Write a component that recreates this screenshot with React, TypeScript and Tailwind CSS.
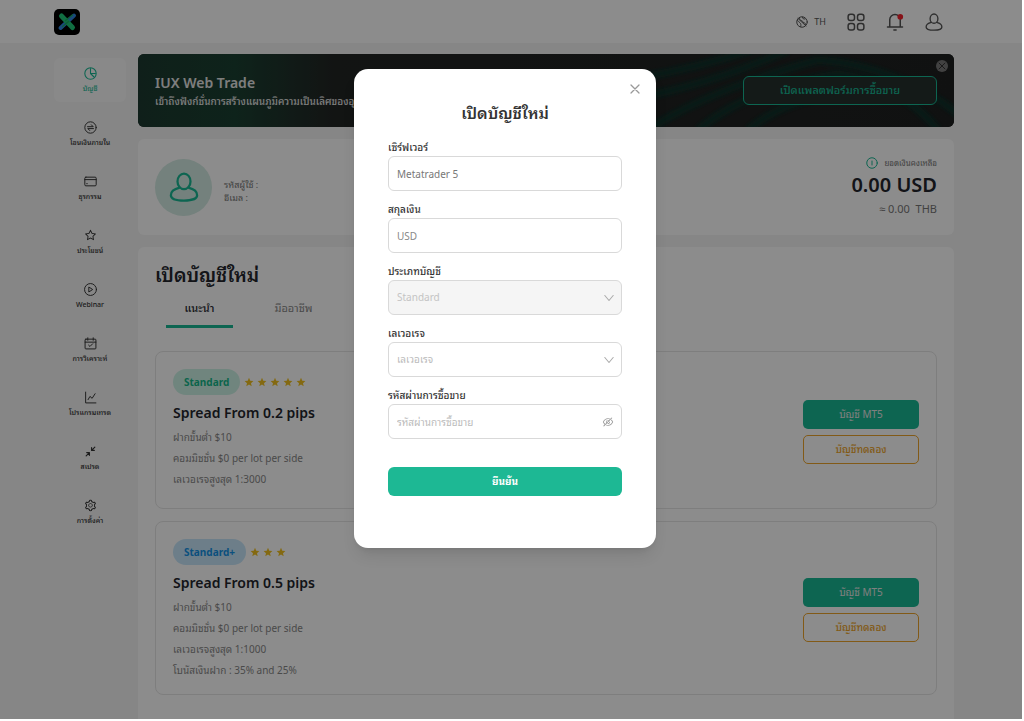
import { useState } from "react";
import type { ReactNode } from "react";
import { AiOutlineEyeInvisible, AiOutlineEye, AiOutlineStar, AiOutlineSetting } from "react-icons/ai";

type IconProps = { className?: string };

function Svg({ className, children, width = 1.5 }: IconProps & { children: ReactNode; width?: number }) {
  return (
    <svg
      viewBox="0 0 24 24"
      fill="none"
      stroke="currentColor"
      strokeWidth={width}
      strokeLinecap="round"
      strokeLinejoin="round"
      className={className}
      aria-hidden="true"
    >
      {children}
    </svg>
  );
}

function UserIcon({ className }: IconProps) {
  return (
    <Svg className={className} width={1.8}>
      <ellipse cx="12" cy="7.500" rx="5.200" ry="6.200" />
      <path d="M8.500 12.500C4.500 13.500 1.500 15.800 1.500 18.500c0 2.900 4.200 4.300 10.500 4.300s10.500-1.400 10.500-4.300c0-2.700-3-5-7-6" />
    </Svg>
  );
}

function PieIcon({ className }: IconProps) {
  return (
    <Svg className={className} width={2}>
      <circle cx="12" cy="12" r="10.500" />
      <path d="M12 3v9h9M12 12l6 6" />
    </Svg>
  );
}

function TransferIcon({ className }: IconProps) {
  return (
    <Svg className={className} width={1.8}>
      <circle cx="12" cy="12" r="10.500" />
      <path d="M6.500 10.500h10.500l-3.500-3.500M17.500 14H7l3.500 3.500" />
    </Svg>
  );
}

function CardIcon({ className }: IconProps) {
  return (
    <Svg className={className} width={1.8}>
      <rect x="1.500" y="4" width="21" height="16" rx="2" />
      <path d="M1.500 8.500h21M5 16h1" />
    </Svg>
  );
}

function PlayIcon({ className }: IconProps) {
  return (
    <Svg className={className} width={1.8}>
      <circle cx="12" cy="12" r="11" />
      <path d="M9.500 7.800l6.500 4.200-6.500 4.200z" />
    </Svg>
  );
}

function CalendarIcon({ className }: IconProps) {
  return (
    <Svg className={className} width={1.8}>
      <rect x="2" y="4" width="20" height="18" rx="1.500" />
      <path d="M2 9.500h20M7 1.500v4.500M17 1.500v4.500M8.500 15l2.500 2.500 5-5" />
    </Svg>
  );
}

function ChartIcon({ className }: IconProps) {
  return (
    <Svg className={className} width={1.8}>
      <path d="M3 2v20h19" />
      <path d="M7.500 16l3.500-6 4 3.500 5.500-8.500" />
    </Svg>
  );
}

function SpreadIcon({ className }: IconProps) {
  return (
    <Svg className={className} width={2.2}>
      <path d="M20 4l-6 6M14 5v5h5M4 20l6-6M10 19v-5H5" />
    </Svg>
  );
}

function GlobeIcon({ className }: IconProps) {
  return (
    <Svg className={className} width={2}>
      <circle cx="12" cy="12" r="10.500" />
      <path d="M7 3.500c0 4 1 5 4 5.500s2 4 5 4.500 3 2 3 5M3 9c3 1 3 4 5 5s2 4 1.500 7M13 2.500c0 3 2 4 5 3.500" />
      <path d="M4 5l16 15" />
    </Svg>
  );
}

function GridIcon({ className }: IconProps) {
  return (
    <Svg className={className} width={2}>
      <rect x="1.500" y="1.500" width="8.500" height="8.500" rx="3" />
      <rect x="14" y="1.500" width="8.500" height="8.500" rx="3" />
      <rect x="1.500" y="14" width="8.500" height="8.500" rx="3" />
      <rect x="14" y="14" width="8.500" height="8.500" rx="3" />
    </Svg>
  );
}

function BellIcon({ className }: IconProps) {
  return (
    <Svg className={className} width={2}>
      <path d="M5 18.500V9a7 7 0 0 1 14 0v9.500M2 18.500h20M10.500 22.500h3" />
      <circle cx="19" cy="5" r="3.800" fill="#f5222d" stroke="none" />
    </Svg>
  );
}

function Logo() {
  return (
    <svg viewBox="0 0 26 26" className="size-[26px]" role="img" aria-label="IUX">
      <rect width="26" height="26" rx="5" fill="#000" />
      <path d="M20 6.500L6.500 19" stroke="#2f86e0" strokeWidth="4" strokeLinecap="round" />
      <path d="M7.500 7l11 11.500" stroke="#1fc878" strokeWidth="5" strokeLinecap="round" />
      <path d="M11.500 11.500l7-5.500M8.500 17.500l6-5" stroke="#1ba865" strokeWidth="1.500" strokeLinecap="round" />
    </svg>
  );
}

const NAV = [
  { label: "บัญชี", icon: PieIcon },
  { label: "โอนเงินภายใน", icon: TransferIcon },
  { label: "ธุรกรรม", icon: CardIcon },
  { label: "ประโยชน์", icon: AiOutlineStar },
  { label: "Webinar", icon: PlayIcon },
  { label: "การวิเคราะห์", icon: CalendarIcon },
  { label: "โปรแกรมเทรด", icon: ChartIcon },
  { label: "สเปรด", icon: SpreadIcon },
  { label: "การตั้งค่า", icon: AiOutlineSetting },
];

const PLANS = [
  {
    name: "Standard",
    pill: "bg-[#cdf3e6] text-[#14b88a]",
    stars: 5,
    title: "Spread From 0.2 pips",
    lines: ["ฝากขั้นต่ำ $10", "คอมมิชชั่น $0 per lot per side", "เลเวอเรจสูงสุด 1:3000"],
  },
  {
    name: "Standard+",
    pill: "bg-[#c6e6fa] text-[#1492e6]",
    stars: 3,
    title: "Spread From 0.5 pips",
    lines: [
      "ฝากขั้นต่ำ $10",
      "คอมมิชชั่น $0 per lot per side",
      "เลเวอเรจสูงสุด 1:1000",
      "โบนัสเงินฝาก : 35% and 25%",
    ],
  },
];

function Header() {
  return (
    <header className="flex h-[43px] shrink-0 items-center justify-between bg-white pr-[79px] pl-[54px] text-[#555]">
      <a href="#home">
        <Logo />
      </a>
      <div className="flex items-center gap-[21px]">
        <button type="button" className="flex items-center gap-1.5 text-[9px]">
          <GlobeIcon className="size-3" />
          TH
        </button>
        <button type="button" aria-label="Apps">
          <GridIcon className="size-[18px]" />
        </button>
        <button type="button" aria-label="Notifications">
          <BellIcon className="size-[18px]" />
        </button>
        <button type="button" aria-label="Profile">
          <UserIcon className="size-[18px]" />
        </button>
      </div>
    </header>
  );
}

function Sidebar() {
  return (
    <nav className="flex w-[72px] shrink-0 flex-col gap-[10px] pt-[15px]">
      {NAV.map(({ label, icon: Icon }, i) => (
        <a
          key={label}
          href="#"
          className={`flex h-11 flex-col items-center justify-center gap-1 rounded-md text-[7px] leading-[10px] font-medium whitespace-nowrap ${
            i === 0 ? "bg-[#fafafa] text-[#19b894]" : "text-[#333]"
          }`}
        >
          <Icon className="size-[13px]" />
          {label}
        </a>
      ))}
    </nav>
  );
}

function Banner() {
  return (
    <section className="relative flex h-[73px] items-center justify-between overflow-hidden rounded-md bg-[#1f2322] px-[17px]">
      <svg
        viewBox="0 0 816 73"
        preserveAspectRatio="none"
        className="absolute inset-0 size-full"
        fill="none"
        aria-hidden="true"
      >
        <defs>
          <linearGradient id="glow">
            <stop offset="0" stopColor="#1c3a30" />
            <stop offset="0.120" stopColor="#1b4032" />
            <stop offset="0.240" stopColor="#222524" />
            <stop offset="1" stopColor="#1e2020" />
          </linearGradient>
          <filter id="soft">
            <feGaussianBlur stdDeviation="2" />
          </filter>
        </defs>
        <rect width="816" height="73" fill="url(#glow)" />
        <g stroke="#10332a" strokeWidth="7" filter="url(#soft)">
          <path d="M500 24Q560 14 620 -6M500 44Q580 28 650 -4M510 76Q570 36 680 6M560 76Q610 34 700 20M610 76Q650 42 720 36" />
          <path d="M680 6Q760 12 820 60M700 20Q760 28 800 76" />
        </g>
      </svg>
      <div className="relative text-[#e6e6e6]">
        <h2 className="text-[14px] leading-5 font-semibold">IUX Web Trade</h2>
        <p className="text-[10px] leading-4 font-medium">
          เข้าถึงฟังก์ชั่นการสร้างแผนภูมิความเป็นเลิศของอุตสาหกรรม
        </p>
      </div>
      <button
        type="button"
        className="relative h-[29px] w-[194px] rounded-md border border-[#19b894] bg-[#25302d] text-[11px] font-medium text-[#19b894]"
      >
        เปิดแพลตฟอร์มการซื้อขาย
      </button>
      <button
        type="button"
        aria-label="Dismiss"
        className="absolute top-1.5 right-1.5 flex size-3 items-center justify-center rounded-full bg-[#777] text-[#222]"
      >
        <Svg className="size-2.5" width={2}>
          <path d="M5 5l14 14M19 5L5 19" />
        </Svg>
      </button>
    </section>
  );
}

function Profile() {
  return (
    <section className="flex h-24 items-center justify-between rounded-md bg-white px-[17px]">
      <div className="flex items-center gap-3">
        <div className="flex size-[57px] items-center justify-center rounded-full bg-[#d3ebe3] text-[#19b894]">
          <UserIcon className="size-[30px]" />
        </div>
        <div className="pt-2 text-[9px] leading-[13px] text-[#777]">
          <p>รหัสผู้ใช้ :</p>
          <p>อีเมล :</p>
        </div>
      </div>
      <div className="pt-0.5 text-right text-[#777]">
        <p className="flex items-center justify-end gap-1.5 text-[8px] leading-3">
          <Svg className="size-3 text-[#19b894]" width={2}>
            <circle cx="12" cy="12" r="10.500" />
            <path d="M12 8v8" />
          </Svg>
          ยอดเงินคงเหลือ
        </p>
        <p className="mt-0.5 text-[20px] leading-7 font-semibold text-[#23262d]">0.00 USD</p>
        <p className="text-[11px] leading-5">≈ 0.00 &nbsp;THB</p>
      </div>
    </section>
  );
}

function PlanCard({ plan }: { plan: (typeof PLANS)[number] }) {
  return (
    <article className="flex min-h-[158px] justify-between rounded-lg border border-[#e6e6e6] px-[17px] pt-[17px] pb-[13px]">
      <div>
        <div className="flex items-center gap-1">
          <span className={`rounded-full px-[11px] text-[10px] leading-[26px] font-bold ${plan.pill}`}>
            {plan.name}
          </span>
          <span className="flex gap-[3px] text-[#f0c020]">
            {Array.from({ length: plan.stars }, (_, i) => (
              <svg key={i} viewBox="0 0 24 24" fill="currentColor" className="size-2.5" aria-hidden="true">
                <path d="M12 2l3 7 7.500.700-5.700 5 1.700 7.300-6.500-3.900L5.500 22l1.700-7.300-5.700-5L9 9z" />
              </svg>
            ))}
          </span>
        </div>
        <h3 className="mt-2 mb-1 text-[14px] leading-5 font-semibold text-[#23262d]">{plan.title}</h3>
        {plan.lines.map((line) => (
          <p key={line} className="text-[10px] leading-[21px] text-[#888]">
            {line}
          </p>
        ))}
      </div>
      <div className="flex w-[116px] flex-col justify-center gap-1.5 text-[10px]">
        <button type="button" className="h-[29px] rounded-[5px] bg-[#19b894] text-[#e8e8e8]">
          บัญชี MT5
        </button>
        <button type="button" className="h-[29px] rounded-[5px] border border-[#eda42a] font-medium text-[#eda42a]">
          บัญชีทดลอง
        </button>
      </div>
    </article>
  );
}

function Accounts() {
  return (
    <section className="flex-1 rounded-t-md bg-white px-[17px] pt-3.5">
      <h1 className="text-[19px] leading-7 font-semibold text-[#23262d]">เปิดบัญชีใหม่</h1>
      <div className="mt-[7px] mb-[23px] flex gap-[27px] pl-[11px] text-[11px]">
        <button type="button" className="h-8 w-[67px] border-b-[3px] border-[#19b894] pb-1 font-medium text-[#23262d]">
          แนะนำ
        </button>
        <button type="button" className="h-8 w-[67px] border-b-[3px] border-transparent pb-1 text-[#888]">
          มืออาชีพ
        </button>
      </div>
      <div className="flex flex-col gap-3">
        {PLANS.map((plan) => (
          <PlanCard key={plan.name} plan={plan} />
        ))}
      </div>
    </section>
  );
}

function Field({ id, label, children }: { id: string; label: string; children: ReactNode }) {
  return (
    <div>
      <label htmlFor={id} className="block text-[10px] leading-[17px] font-medium text-[#333]">
        {label}
      </label>
      <div className="relative flex items-center">{children}</div>
    </div>
  );
}

const BOX = "h-[35px] w-full appearance-none rounded-md border border-[#d9d9d9] px-2 text-[10px] outline-none";

function Chevron() {
  return (
    <Svg className="pointer-events-none absolute right-2 size-2.5 text-[#aaa]" width={2.5}>
      <path d="M2 6l10 12L22 6" />
    </Svg>
  );
}

function AccountDialog() {
  const [server, setServer] = useState("Metatrader 5");
  const [currency, setCurrency] = useState("USD");
  const [showPassword, setShowPassword] = useState(false);

  return (
    <div
      role="dialog"
      aria-modal="true"
      aria-labelledby="dialog-title"
      className="relative w-[302px] rounded-[14px] bg-white px-[34px] pt-8 pb-[52px] shadow-lg"
    >
      <button type="button" aria-label="Close" className="absolute top-3.5 right-[15px] text-[#999]">
        <Svg className="size-3" width={2.5}>
          <path d="M4 4l16 16M20 4L4 20" />
        </Svg>
      </button>
      <h2 id="dialog-title" className="text-center text-[16px] leading-6 font-semibold text-[#333]">
        เปิดบัญชีใหม่
      </h2>
      <form className="mt-3.5 flex flex-col gap-[10px]" onSubmit={(e) => e.preventDefault()}>
        <Field id="server" label="เซิร์ฟเวอร์">
          <input
            id="server"
            value={server}
            onChange={(e) => setServer(e.target.value)}
            className={`${BOX} text-[#777]`}
          />
        </Field>
        <Field id="currency" label="สกุลเงิน">
          <input
            id="currency"
            value={currency}
            onChange={(e) => setCurrency(e.target.value)}
            className={`${BOX} text-[#888]`}
          />
        </Field>
        <Field id="type" label="ประเภทบัญชี">
          <select id="type" disabled className={`${BOX} bg-[#f5f5f5] text-[#c4c4c4] opacity-100`}>
            <option>Standard</option>
          </select>
          <Chevron />
        </Field>
        <Field id="leverage" label="เลเวอเรจ">
          <select id="leverage" className={`${BOX} text-[#bbb]`}>
            <option>เลเวอเรจ</option>
          </select>
          <Chevron />
        </Field>
        <Field id="password" label="รหัสผ่านการซื้อขาย">
          <input
            id="password"
            type={showPassword ? "text" : "password"}
            placeholder="รหัสผ่านการซื้อขาย"
            className={`${BOX} pr-7 text-[#777] placeholder:text-[#bbb]`}
          />
          <button
            type="button"
            aria-label="Toggle password"
            onClick={() => setShowPassword(!showPassword)}
            className="absolute right-2 text-[#999]"
          >
            {showPassword ? <AiOutlineEye className="size-3" /> : <AiOutlineEyeInvisible className="size-3" />}
          </button>
        </Field>
        <button type="submit" className="mt-[18px] h-[29px] rounded-md bg-[#1db894] text-[10px] font-bold text-white">
          ยืนยัน
        </button>
      </form>
    </div>
  );
}

export default function App() {
  return (
    <div className="h-screen bg-white pr-0.5 pb-0.5 font-['Noto_Sans','Noto_Sans_Thai_Looped','Loma','Waree',sans-serif]">
      <div className="relative flex h-full flex-col overflow-hidden bg-[#f4f4f4]">
        <Header />
        <div className="flex min-h-0 flex-1 gap-3 pr-[68px] pl-[54px]">
          <Sidebar />
          <main className="flex min-w-0 flex-1 flex-col gap-3 pt-[11px]">
            <Banner />
            <Profile />
            <Accounts />
          </main>
        </div>
        <div className="absolute inset-0 flex items-start justify-center bg-black/45 pt-[69px] pr-3">
          <AccountDialog />
        </div>
      </div>
    </div>
  );
}
